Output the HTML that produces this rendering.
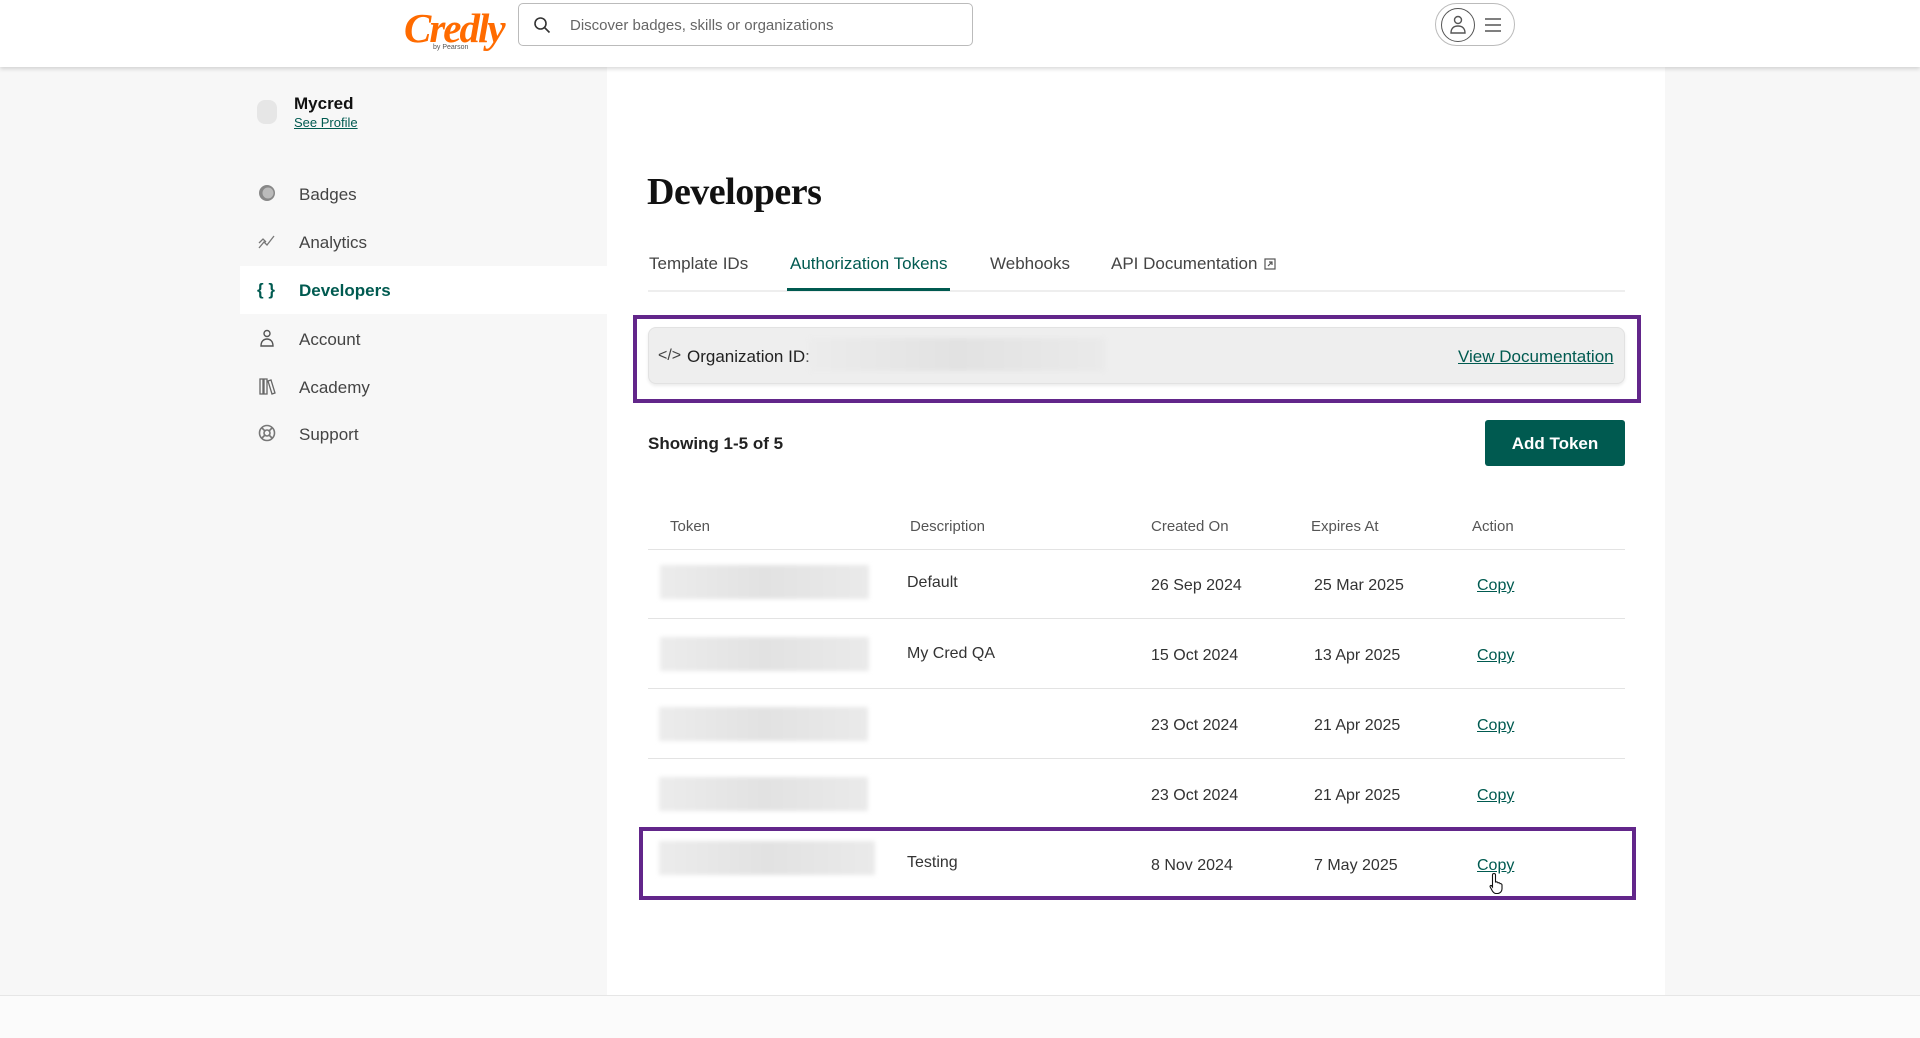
<!DOCTYPE html>
<html><head><meta charset="utf-8"><style>
*{box-sizing:border-box;margin:0;padding:0}
body{width:1920px;height:1038px;background:#f7f7f7;font-family:"Liberation Sans",sans-serif;color:#222;position:relative;overflow:hidden}
.a{position:absolute}
.hdr{left:0;top:0;width:1920px;height:67px;background:#fff;box-shadow:0 2px 4px rgba(0,0,0,.15);z-index:2}
.main{left:607px;top:67px;width:1058px;height:928px;background:#fff}
.foot{left:0;top:995px;width:1920px;height:43px;background:#fbfbfb;border-top:1px solid #e6e6e6}
.nav{left:299px;font-size:17px;color:#444}
.ico{left:258px;width:18px;height:18px}
.tab{top:254px;font-size:17px;color:#444}
.th{top:518px;font-size:15px;color:#555}
.td{font-size:16px;color:#333}
.blur{background:linear-gradient(90deg,#ececec,#e2e2e2 50%,#eaeaea);filter:blur(2px)}
.line{left:648px;width:977px;height:1px;background:#e3e3e3}
.copy{left:1477px;font-size:16px;color:#005a50;text-decoration:underline}
</style></head><body>
<div class="a hdr">
  <div class="a" style="left:404px;top:4px;font-family:'Liberation Serif',serif;font-style:italic;font-weight:bold;font-size:41px;color:#ff6b00;letter-spacing:-2px">Credly</div>
  <div class="a" style="left:433px;top:44px;font-size:7px;color:#555">by Pearson</div>
  <div class="a" style="left:518px;top:3px;width:455px;height:43px;border:1px solid #bbb;border-radius:5px">
    <svg class="a" style="left:14px;top:12px" width="18" height="18" viewBox="0 0 18 18" fill="none" stroke="#333" stroke-width="1.6"><circle cx="7.5" cy="7.5" r="5.5"/><path d="M11.5 11.5l5 5"/></svg>
    <div class="a" style="left:51px;top:13px;font-size:15px;color:#666">Discover badges, skills or organizations</div>
  </div>
  <div class="a" style="left:1435px;top:3px;width:80px;height:43px;border:1px solid #bbb;border-radius:22px">
    <div class="a" style="left:5px;top:4px;width:34px;height:34px;border:1px solid #555;border-radius:50%">
      <svg class="a" style="left:8px;top:6px" width="16" height="20" viewBox="0 0 16 20" fill="none" stroke="#555" stroke-width="1.4"><circle cx="8" cy="5" r="3.5"/><path d="M1 18c0-5 3-7 7-7s7 2 7 7z"/></svg>
    </div>
    <svg class="a" style="left:48px;top:13px" width="18" height="16" viewBox="0 0 18 16" stroke="#555" stroke-width="1.6"><path d="M1 2h16M1 8h16M1 14h16"/></svg>
  </div>
</div>
<div class="a main"></div>
<div class="a foot"></div>

<div class="a" style="left:257px;top:100px;width:20px;height:24px;background:#e6e6e6;border-radius:8px"></div>
<div class="a" style="left:294px;top:94px;font-size:17px;font-weight:bold;color:#111">Mycred</div>
<div class="a" style="left:294px;top:115px;font-size:13px;color:#005a50;text-decoration:underline">See Profile</div>

<div class="a" style="left:240px;top:266px;width:367px;height:48px;background:#fff"></div>
<svg class="a ico" style="top:184px" viewBox="0 0 18 18"><circle cx="9" cy="9" r="8" fill="#888"/><circle cx="10" cy="9" r="5.5" fill="#bbb"/></svg>
<div class="a nav" style="top:185px">Badges</div>
<svg class="a ico" style="top:232px" viewBox="0 0 18 18" fill="none" stroke="#777" stroke-width="1.3"><path d="M1 16l5-6 3 3 7-9M1 11l4-4 3 3"/></svg>
<div class="a nav" style="top:233px">Analytics</div>
<div class="a" style="left:257px;top:280px;font-size:17px;font-weight:bold;color:#005a50">{ }</div>
<div class="a nav" style="top:281px;font-weight:bold;color:#005a50">Developers</div>
<svg class="a ico" style="top:329px" viewBox="0 0 18 18" fill="none" stroke="#555" stroke-width="1.4"><circle cx="9" cy="4.5" r="3"/><path d="M3 17c0-5 3-7 6-7s6 2 6 7z"/></svg>
<div class="a nav" style="top:330px">Account</div>
<svg class="a ico" style="top:377px" viewBox="0 0 18 18" fill="none" stroke="#666" stroke-width="1.3"><path d="M2 2h3v15H2zM6 2h3v15H6zM10 4l3-1 4 13-3 1z"/></svg>
<div class="a nav" style="top:378px">Academy</div>
<svg class="a ico" style="top:424px" viewBox="0 0 18 18" fill="none" stroke="#777" stroke-width="1.6"><circle cx="9" cy="9" r="7.5"/><circle cx="9" cy="9" r="3"/><path d="M4 4l3 3M14 4l-3 3M4 14l3-3M14 14l-3-3"/></svg>
<div class="a nav" style="top:425px">Support</div>

<div class="a" style="left:647px;top:170px;font-family:'Liberation Serif',serif;font-weight:bold;font-size:38px;color:#111;letter-spacing:-.5px">Developers</div>
<div class="a tab" style="left:649px">Template IDs</div>
<div class="a tab" style="left:790px;color:#005a50">Authorization Tokens</div>
<div class="a tab" style="left:990px">Webhooks</div>
<div class="a tab" style="left:1111px">API Documentation</div>
<svg class="a" style="left:1264px;top:258px" width="12" height="12" viewBox="0 0 12 12" fill="none" stroke="#555" stroke-width="1.2"><rect x="1" y="1" width="10" height="10"/><path d="M4 8l4-4M5 4h3v3"/></svg>
<div class="a" style="left:648px;top:290px;width:977px;height:2px;background:#eee"></div>
<div class="a" style="left:787px;top:288px;width:163px;height:3px;background:#005a50"></div>

<div class="a" style="left:633px;top:315px;width:1008px;height:88px;border:4px solid #62268a"></div>
<div class="a" style="left:648px;top:327px;width:977px;height:57px;background:#eee;border:1px solid #e2e2e2;border-radius:8px;box-shadow:0 2px 3px rgba(0,0,0,.08)"></div>
<div class="a" style="left:658px;top:347px;font-size:16px;color:#444">&lt;/&gt;</div>
<div class="a" style="left:687px;top:347px;font-size:17px;color:#222">Organization ID:</div>
<div class="a blur" style="left:809px;top:338px;width:296px;height:33px"></div>
<div class="a" style="left:1458px;top:347px;font-size:17px;color:#005a50;text-decoration:underline">View Documentation</div>

<div class="a" style="left:648px;top:434px;font-size:17px;font-weight:bold;color:#222">Showing 1-5 of 5</div>
<div class="a" style="left:1485px;top:420px;width:140px;height:46px;background:#005a50;border-radius:3px;color:#fff;font-weight:bold;font-size:17px;text-align:center;line-height:47px">Add Token</div>

<div class="a th" style="left:670px">Token</div>
<div class="a th" style="left:910px">Description</div>
<div class="a th" style="left:1151px">Created On</div>
<div class="a th" style="left:1311px">Expires At</div>
<div class="a th" style="left:1472px">Action</div>
<div class="a line" style="top:549px"></div>
<div class="a line" style="top:618px"></div>
<div class="a line" style="top:688px"></div>
<div class="a line" style="top:758px"></div>

<div class="a blur" style="left:660px;top:565px;width:209px;height:34px"></div>
<div class="a td" style="left:907px;top:574px">Default</div>
<div class="a td" style="left:1151px;top:577px">26 Sep 2024</div>
<div class="a td" style="left:1314px;top:577px">25 Mar 2025</div>
<div class="a copy" style="top:577px">Copy</div>

<div class="a blur" style="left:660px;top:637px;width:209px;height:34px"></div>
<div class="a td" style="left:907px;top:645px">My Cred QA</div>
<div class="a td" style="left:1151px;top:647px">15 Oct 2024</div>
<div class="a td" style="left:1314px;top:647px">13 Apr 2025</div>
<div class="a copy" style="top:647px">Copy</div>

<div class="a blur" style="left:659px;top:707px;width:209px;height:34px"></div>
<div class="a td" style="left:1151px;top:717px">23 Oct 2024</div>
<div class="a td" style="left:1314px;top:717px">21 Apr 2025</div>
<div class="a copy" style="top:717px">Copy</div>

<div class="a blur" style="left:659px;top:777px;width:209px;height:34px"></div>
<div class="a td" style="left:1151px;top:787px">23 Oct 2024</div>
<div class="a td" style="left:1314px;top:787px">21 Apr 2025</div>
<div class="a copy" style="top:787px">Copy</div>

<div class="a" style="left:639px;top:827px;width:997px;height:73px;border:4px solid #62268a"></div>
<div class="a blur" style="left:659px;top:841px;width:216px;height:34px"></div>
<div class="a td" style="left:907px;top:854px">Testing</div>
<div class="a td" style="left:1151px;top:857px">8 Nov 2024</div>
<div class="a td" style="left:1314px;top:857px">7 May 2025</div>
<div class="a copy" style="top:857px">Copy</div>
<svg class="a" style="left:1489px;top:872px" width="16" height="22" viewBox="0 0 16 22"><path d="M5 1.5c1 0 1.5.7 1.5 1.5v7l1-.2c.8 0 1.3.5 1.5 1 .8-.3 1.8 0 2 .8.9-.2 1.8.3 2 1.2v4c0 2.5-2 4.7-4.5 4.7H7c-1.5 0-2.5-1-3.5-2.3L1.2 15c-.5-.8.2-1.8 1.2-1.5L3.5 15V3c0-.8.6-1.5 1.5-1.5z" fill="#fff" stroke="#111" stroke-width="1.1"/></svg>
</body></html>
